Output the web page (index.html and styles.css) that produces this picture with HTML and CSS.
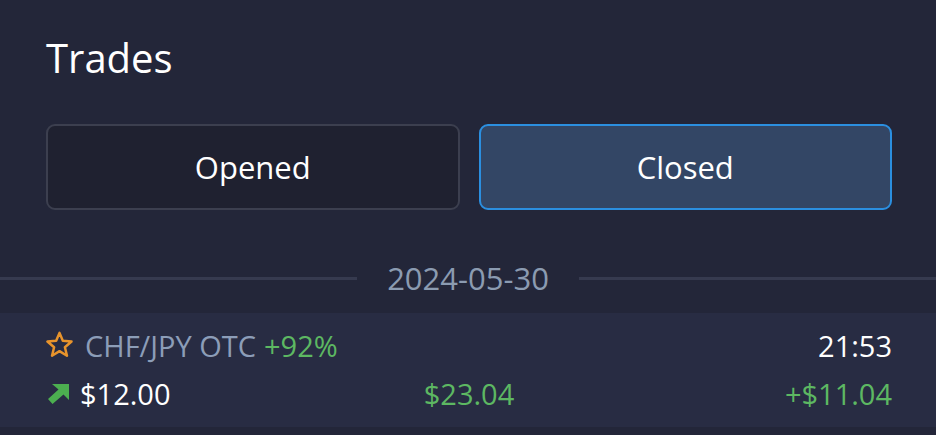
FILE: index.html
```html
<!DOCTYPE html>
<html>

<head>
	<title>Trades</title>
	<link rel="stylesheet" href="styles.css">
</head>

<body>
	<div class="panel">
		<h1 class="title">Trades</h1>

		<div class="tabs">
			<button class="tab">Opened</button>
			<button class="tab tab-active">Closed</button>
		</div>

		<div class="divider">
			<span class="divider-line"></span>
			<span class="divider-date">2024-05-30</span>
			<span class="divider-line"></span>
		</div>

		<div class="trade">
			<div class="trade-line">
				<span class="trade-asset">
					<svg class="star" width="27" height="27" viewBox="0 0 26 26">
						<path d="M13 1.8 L16.2 9.4 L24.6 10.1 L18.2 15.6 L20.2 23.8 L13 19.4 L5.8 23.8 L7.8 15.6 L1.4 10.1 L9.8 9.4 Z"
							fill="none" stroke="#e8942c" stroke-width="2.4" stroke-linejoin="round" />
					</svg>
					<span class="asset-name">CHF/JPY OTC</span>
					<span class="green">+92%</span>
				</span>
				<span class="trade-time">21:53</span>
			</div>
			<div class="trade-line">
				<span class="trade-amount">
					<svg class="arrow" width="22" height="20" viewBox="0 0 22 20">
						<polygon points="5,0 22,0 22,16 16.5,10.5 5.5,20 1,15 11.5,5.5" fill="#4caf50" />
					</svg>
					<span>$12.00</span>
				</span>
				<span class="green payout">$23.04</span>
				<span class="green profit">+$11.04</span>
			</div>
		</div>
	</div>
</body>

</html>
```

FILE: styles.css
```css
body {
	margin: 0;
	font-family: "Open Sans", "Noto Sans", sans-serif;
	color: #fff;
	background-color: #232639;
}

.panel {
	padding: 0 44px 0 46px;
}

.title {
	margin: 0;
	padding-top: 30px;
	font-size: 40px;
	font-weight: 400;
	line-height: 56px;
}

.tabs {
	display: grid;
	grid-template-columns: 1fr 1fr;
	gap: 19px;
	margin-top: 38px;
}

.tab {
	height: 86px;
	font-family: inherit;
	font-size: 31px;
	color: #fff;
	background-color: #1f2130;
	border: 2px solid #3c3f4f;
	border-radius: 9px;
}

.tab-active {
	background-color: #334665;
	border-color: #2b8fe0;
}

.divider {
	display: flex;
	align-items: center;
	gap: 30px;
	height: 40px;
	margin: 48px -44px 0 -46px;
}

.divider-line {
	flex: 1;
	height: 3px;
	background-color: #363a4f;
}

.divider-date {
	font-size: 31px;
	color: #8b9bb1;
}

.trade {
	margin: 15px -44px 0 -46px;
	padding: 9px 44px 9px 46px;
	background-color: #282c43;
	font-size: 29px;
	line-height: 48px;
}

.trade-line {
	display: flex;
	justify-content: space-between;
	align-items: center;
}

.trade-asset,
.trade-amount {
	display: flex;
	align-items: center;
}

.star {
	margin-right: 12px;
	margin-top: -3px;
}

.arrow {
	margin-right: 11px;
	margin-left: 1px;
}

.asset-name {
	color: #8c9db8;
	margin-right: 8px;
}

.green {
	color: #5db862;
}

.trade-amount,
.profit {
	flex: 1;
}

.profit {
	text-align: right;
}

.payout {
	flex: none;
}
```
